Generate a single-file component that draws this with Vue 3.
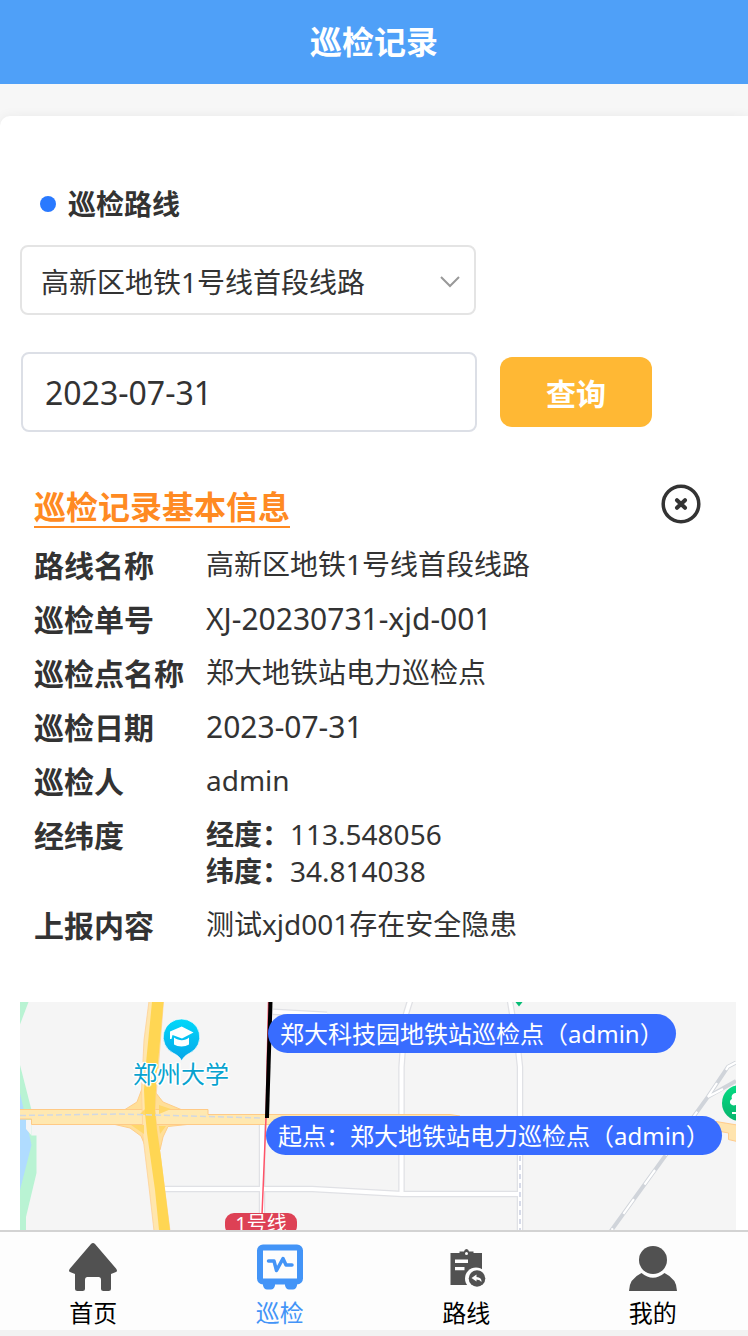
<script setup>
import { ref } from 'vue'

const route = ref('高新区地铁1号线首段线路')
const date = ref('2023-07-31')
const detailOpen = ref(true)

const basics = [
  { label: '路线名称', value: '高新区地铁1号线首段线路' },
  { label: '巡检单号', value: 'XJ-20230731-xjd-001', code: true },
  { label: '巡检点名称', value: '郑大地铁站电力巡检点' },
  { label: '巡检日期', value: '2023-07-31', code: true },
  { label: '巡检人', value: 'admin' }
]
</script>

<template>
  <div class="page">
    <header class="topbar">
      <h1>巡检记录</h1>
    </header>

    <main class="content">
      <section class="card">
        <label class="route-label" for="route">巡检路线</label>
        <div class="select-wrap">
          <select id="route" v-model="route">
            <option>高新区地铁1号线首段线路</option>
          </select>
          <svg class="chevron" viewBox="0 0 20 12" aria-hidden="true">
            <path d="M1 1 L10 10 L19 1" />
          </svg>
        </div>

        <form class="search" @submit.prevent>
          <input v-model="date" type="text" aria-label="巡检日期" />
          <button type="submit" class="query">查询</button>
        </form>

        <div v-if="detailOpen" class="detail">
          <div class="detail-head">
            <h2>巡检记录基本信息</h2>
            <button type="button" class="close" aria-label="关闭" @click="detailOpen = false">
              <svg viewBox="0 0 40 40" aria-hidden="true">
                <circle cx="20" cy="20" r="17.8" />
                <path d="M16 16.2 L24 23.8 M24 16.2 L16 23.8" />
              </svg>
            </button>
          </div>
          <dl>
            <div v-for="row in basics" :key="row.label" class="row">
              <dt>{{ row.label }}</dt>
              <dd :class="{ code: row.code }">{{ row.value }}</dd>
            </div>
            <div class="row coords">
              <dt>经纬度</dt>
              <dd>
                <div><b>经度：</b>113.548056</div>
                <div><b>纬度：</b>34.814038</div>
              </dd>
            </div>
            <div class="row">
              <dt>上报内容</dt>
              <dd>测试xjd001存在安全隐患</dd>
            </div>
          </dl>
        </div>

        <div class="map">
          <svg class="map-base" viewBox="0 0 716 300" width="716" height="300" aria-hidden="true">
            <defs>
              <linearGradient id="school" x1="0" y1="0" x2="0" y2="1">
                <stop offset="0" stop-color="#00d8fa" />
                <stop offset="1" stop-color="#08a5e8" />
              </linearGradient>
              <linearGradient id="park" x1="0" y1="0" x2="0" y2="1">
                <stop offset="0" stop-color="#06dc83" />
                <stop offset="1" stop-color="#07b36d" />
              </linearGradient>
            </defs>
            <!-- green belt and water -->
            <path fill="#b9f3d3" d="M0 0H8.5L0 22.5ZM0 63L11.5 108V133.500H16.500V171L6 215V300H0Z" />
            <path fill="#b0dcff" d="M0 91L6 118L11.500 143L0 188Z" />
            <path fill="#f5f5f5" d="M6 118H11.500V133.500L6 127Z" />

            <!-- side streets -->
            <g fill="none" stroke="#e0e1e5" stroke-width="6.500" stroke-linejoin="round">
              <path d="M145 187H292L382 192H502" />
              <path d="M242 122V228" />
              <path d="M253 9.700L307 12.700" />
              <path d="M390 -1L386 12L382.500 51L381.500 65V192" />
              <path d="M490 -1L498.500 51L500 65V300" />
            </g>
            <g fill="none" stroke="#fff" stroke-width="4" stroke-linejoin="round">
              <path d="M145 187H292L382 192H502" />
              <path d="M242 122V228" />
              <path d="M253 9.700L307 12.700" />
              <path d="M390 -1L386 12L382.500 51L381.500 65V193" />
              <path d="M490 -1L498.500 51L500 65V300" />
            </g>
            <path d="M500 154V300" fill="none" stroke="#d6dae8" stroke-width="2" stroke-dasharray="5 4" />

            <!-- trunk roads and interchange -->
            <path fill="#ffdf98" stroke="#ffcd88" d="M121.500 88L117 100L105 107.500H161L143 100L136 91ZM95 122.500L110 126L121 134L126 146L140 148L143 135L148 124.500L167 122.500Z" />
            <path fill="#ffe8b0" stroke="#ffca86" d="M-1 107.500H188V112.500H430L440 114V122.500H11.500V117H-1Z" />
            <path fill="#ffe6ad" stroke="#ffd096" stroke-width=".8" d="M129 -1L124 38L121.500 88L123 135L129 185L134 229L142 301H160L150 229L137 128L135 108L143.500 -1Z" />
            <path fill="#ffd653" d="M132 0L126.500 56L124 88L125 111L127 131L135 188L139 228L147 300H159L150 228L141 155L137 128L135 108L136.500 78L143.500 0Z" />
            <path fill="#ffd76a" d="M139 103L151 107L139 112ZM120 112L125 107V113ZM111 123L124 132V123ZM139 124H146L140 132Z" />
            <path fill="none" stroke="#d1d8e3" stroke-width="1.500" stroke-dasharray="6 3" d="M0 113.500L100 112L240 116" />

            <!-- railway -->
            <g fill="none" stroke="#d0d4da" stroke-width="4">
              <path d="M588 233L688 94.700L708 64.700L716 60.500" />
              <path d="M688 94.700L716 79" />
            </g>
            <g fill="none" stroke="#fff" stroke-width="2.200">
              <path d="M591.700 228L688 94.700" stroke-dasharray="18 18" stroke-dashoffset="-20" />
              <path d="M688 94.700L697 81M706 68L708 64.700L716 60.500M688 94.700L703 87" />
            </g>
            <path fill="#ffe4ae" stroke="#ffcb8a" d="M696 119.500L717 123V139.500L708.500 137.500V131L698 129Z" />

            <!-- metro line and walked track -->
            <path fill="none" stroke="#ff5368" stroke-width="1.500" d="M248.500 0L246 116L242 213" />
            <path fill="none" stroke="#000" stroke-width="4" d="M250.500 0L247 116" />

            <!-- markers -->
            <path fill="#06bd75" d="M495.500 0H502.500L499 4.500Z" />
            <path fill="url(#school)" stroke="#fff" stroke-width=".7" d="M161.700 17A18 18 0 0 1 170 51C166 53 163.500 55 161.700 59C160 55 157 53 153 51A18 18 0 0 1 161.700 17Z" />
            <path fill="#fff" d="M150 29.500L161.700 24.500L173.500 30.500L162 36.500L152.500 33L151.500 37H150ZM154 35.500C159 39 165 39 169 35.500V42.500C165 45 158 45 154 42.500Z" />
            <circle cx="720" cy="101" r="18" fill="url(#park)" />
            <path fill="#fff" d="M716 91C712 91 711 95 712 97C708 99 710 105 716 103V110H712V112H717V91Z" />
          </svg>
          <span class="place">郑州大学</span>
          <span class="metro">1号线</span>
          <span class="pin first">郑大科技园地铁站巡检点（admin）</span>
          <span class="pin start">起点：郑大地铁站电力巡检点（admin）</span>
        </div>
      </section>
    </main>

    <nav class="tabs">
      <a href="#home">
        <svg viewBox="0 0 48 48" aria-hidden="true">
          <path fill="#515151" d="M22 1Q24 -.8 26 1L47 25.500Q49 28 47 29L42 31V45.500Q42 48 39.500 48H34.500Q32 48 32 45.500V37Q32 34 29.500 34H18.500Q16 34 16 37V45.500Q16 48 13.500 48H8.500Q6 48 6 45.500V31L1 29Q-1 28 1 25.500Z" />
        </svg>
        <span>首页</span>
      </a>
      <a href="#inspect" class="active">
        <svg viewBox="0 0 48 48" aria-hidden="true">
          <rect x="4" y="4.500" width="40" height="34" rx="3" fill="none" stroke="#4394f7" stroke-width="6" />
          <path fill="#4394f7" d="M7 39H19V42.500Q18 46.500 15 46.500H11Q8 46.500 7 42.500ZM29 39H41V42.500Q40 46.500 37 46.500H33Q30 46.500 29 42.500Z" />
          <path fill="none" stroke="#4394f7" stroke-width="3.500" stroke-linecap="round" stroke-linejoin="round" d="M12.500 18H18L20.500 27.500L27 15.500L30 22H36" />
        </svg>
        <span>巡检</span>
      </a>
      <a href="#route-list">
        <svg viewBox="0 0 48 48" aria-hidden="true">
          <path fill="#515151" d="M8.500 10H17.500V8.500H22Q22.500 6 24.500 6Q26.500 6 27 8.500H31.500V10H40V42H8.500Z" />
          <circle cx="24.500" cy="10.500" r="1.500" fill="#fdfdfd" />
          <path fill="#fdfdfd" d="M13 16.500H26V20H13ZM13 24H22.500V27.200H13Z" />
          <circle cx="34" cy="35.500" r="11" fill="#fdfdfd" />
          <circle cx="35" cy="35.500" r="8.300" fill="#515151" />
          <path fill="#fdfdfd" d="M29.500 35L34.500 31.500V34Q40 34.500 39.500 39Q38 36.500 34.500 36.500V38.500Z" />
        </svg>
        <span>路线</span>
      </a>
      <a href="#mine">
        <svg viewBox="0 0 48 48" aria-hidden="true">
          <circle cx="24" cy="17" r="14" fill="#515151" />
          <path fill="#515151" d="M12.500 30Q24 39.500 35.500 30Q48 36 48 48H0Q0 36 12.500 30Z" />
        </svg>
        <span>我的</span>
      </a>
    </nav>
  </div>
</template>

<style>
body {
  background: #f7f7f7;
}
</style>

<style scoped>
.page,
.page * {
  box-sizing: border-box;
}
.page {
  display: flex;
  flex-direction: column;
  height: 100vh;
  padding-bottom: 6px;
  background: #f2f2f2;
  color: #333;
  font-family: "Noto Sans", "Noto Sans CJK SC", sans-serif;
  font-size: 28px;
}
h1,
h2,
dl,
dd {
  margin: 0;
}
.topbar {
  flex: none;
  background: #4fa0f8;
  color: #fff;
  text-align: center;
}
h1 {
  font-size: 32px;
  line-height: 84px;
}
.content {
  flex: 1;
  min-height: 0;
  overflow: hidden;
  padding-top: 32px;
  background: #f7f7f7;
}
.card {
  padding: 68px 12px 0 20px;
  border-radius: 10px 0 0 0;
  background: #fff;
  box-shadow: 0 0 12px rgba(0, 0, 0, 0.06);
}
.route-label {
  display: flex;
  align-items: center;
  gap: 12px;
  padding-left: 20px;
  line-height: 40px;
  font-weight: 700;
}
.route-label::before {
  content: "";
  width: 16px;
  height: 16px;
  border-radius: 50%;
  background: #2979ff;
}
.select-wrap {
  position: relative;
  max-width: 456px;
  margin-top: 21px;
}
select {
  display: block;
  width: 100%;
  height: 70px;
  padding: 4px 60px 0 19px;
  border: 2px solid #e4e4e4;
  border-radius: 8px;
  appearance: none;
  background: #fff;
  color: inherit;
  font: inherit;
}
.chevron {
  position: absolute;
  top: 31px;
  right: 16px;
  width: 20px;
  height: 12px;
  pointer-events: none;
}
.chevron path {
  fill: none;
  stroke: #999;
  stroke-width: 2;
}
.search {
  display: flex;
  align-items: center;
  gap: 23px;
  margin-top: 37px;
  padding-left: 1px;
}
.search input {
  width: 456px;
  min-width: 0;
  height: 80px;
  padding: 0 22px;
  border: 2px solid #dcdfe6;
  border-radius: 8px;
  background: #fff;
  color: inherit;
  font: inherit;
  font-size: 32px;
}
.query {
  flex: none;
  width: 152px;
  height: 70px;
  padding: 0;
  border: 0;
  border-radius: 12px;
  background: #ffb834;
  color: #fff;
  font: inherit;
  font-size: 30px;
  font-weight: 700;
}
.detail {
  padding: 52px 14px 0;
}
.detail-head {
  display: flex;
  align-items: flex-start;
  justify-content: space-between;
}
h2 {
  height: 44px;
  border-bottom: 2px solid #ff8a22;
  color: #ff8a22;
  font-size: 32px;
  line-height: 46px;
}
.close {
  width: 40px;
  height: 40px;
  margin-right: 21px;
  padding: 0;
  border: 0;
  background: none;
}
.close svg {
  display: block;
}
.close circle,
.close path {
  fill: none;
  stroke: #333;
  stroke-width: 3.5;
  stroke-linecap: round;
}
.close path {
  stroke-width: 4;
}
dl {
  display: grid;
  gap: 14px;
  padding-top: 18px;
}
.row {
  display: grid;
  grid-template-columns: 172px 1fr;
}
.coords {
  padding-bottom: 2px;
}
dt {
  font-size: 30px;
  font-weight: 700;
  line-height: 40px;
}
dd {
  line-height: 37px;
}
.code {
  font-size: 30px;
}
.map {
  position: relative;
  height: 300px;
  margin-top: 56px;
  overflow: hidden;
  background: #f5f5f5;
}
.map-base {
  display: block;
}
.map span {
  position: absolute;
  white-space: nowrap;
}
.place {
  top: 54px;
  left: 113px;
  color: #08a3cf;
  font-size: 24px;
  line-height: 36px;
  text-shadow: 1px 1px #fff, -1px -1px #fff, 1px -1px #fff, -1px 1px #fff, 2px 0 #fff, -2px 0 #fff;
}
.metro {
  top: 211px;
  left: 205px;
  width: 72px;
  border-radius: 9px;
  background: #dd4155;
  color: #fff;
  font-size: 20px;
  line-height: 22px;
  text-align: center;
}
.pin {
  padding: 0 12px;
  border-radius: 20px;
  background: #386cff;
  color: #fff;
  font-size: 24px;
  line-height: 39px;
}
.first {
  top: 12px;
  left: 248px;
}
.start {
  top: 114px;
  left: 246px;
}
.tabs {
  z-index: 1;
  display: flex;
  flex: none;
  height: 100px;
  padding-right: 2px;
  border-top: 2px solid #d3d3d3;
  background: #fdfdfd;
}
.tabs a {
  display: flex;
  flex: 1;
  flex-direction: column;
  align-items: center;
  gap: 4px;
  padding-top: 11px;
  color: #000;
  font-size: 24px;
  line-height: 36px;
  text-decoration: none;
}
.tabs svg {
  flex: none;
  width: 48px;
  height: 48px;
}
.tabs .active {
  color: #4394f7;
}
</style>
